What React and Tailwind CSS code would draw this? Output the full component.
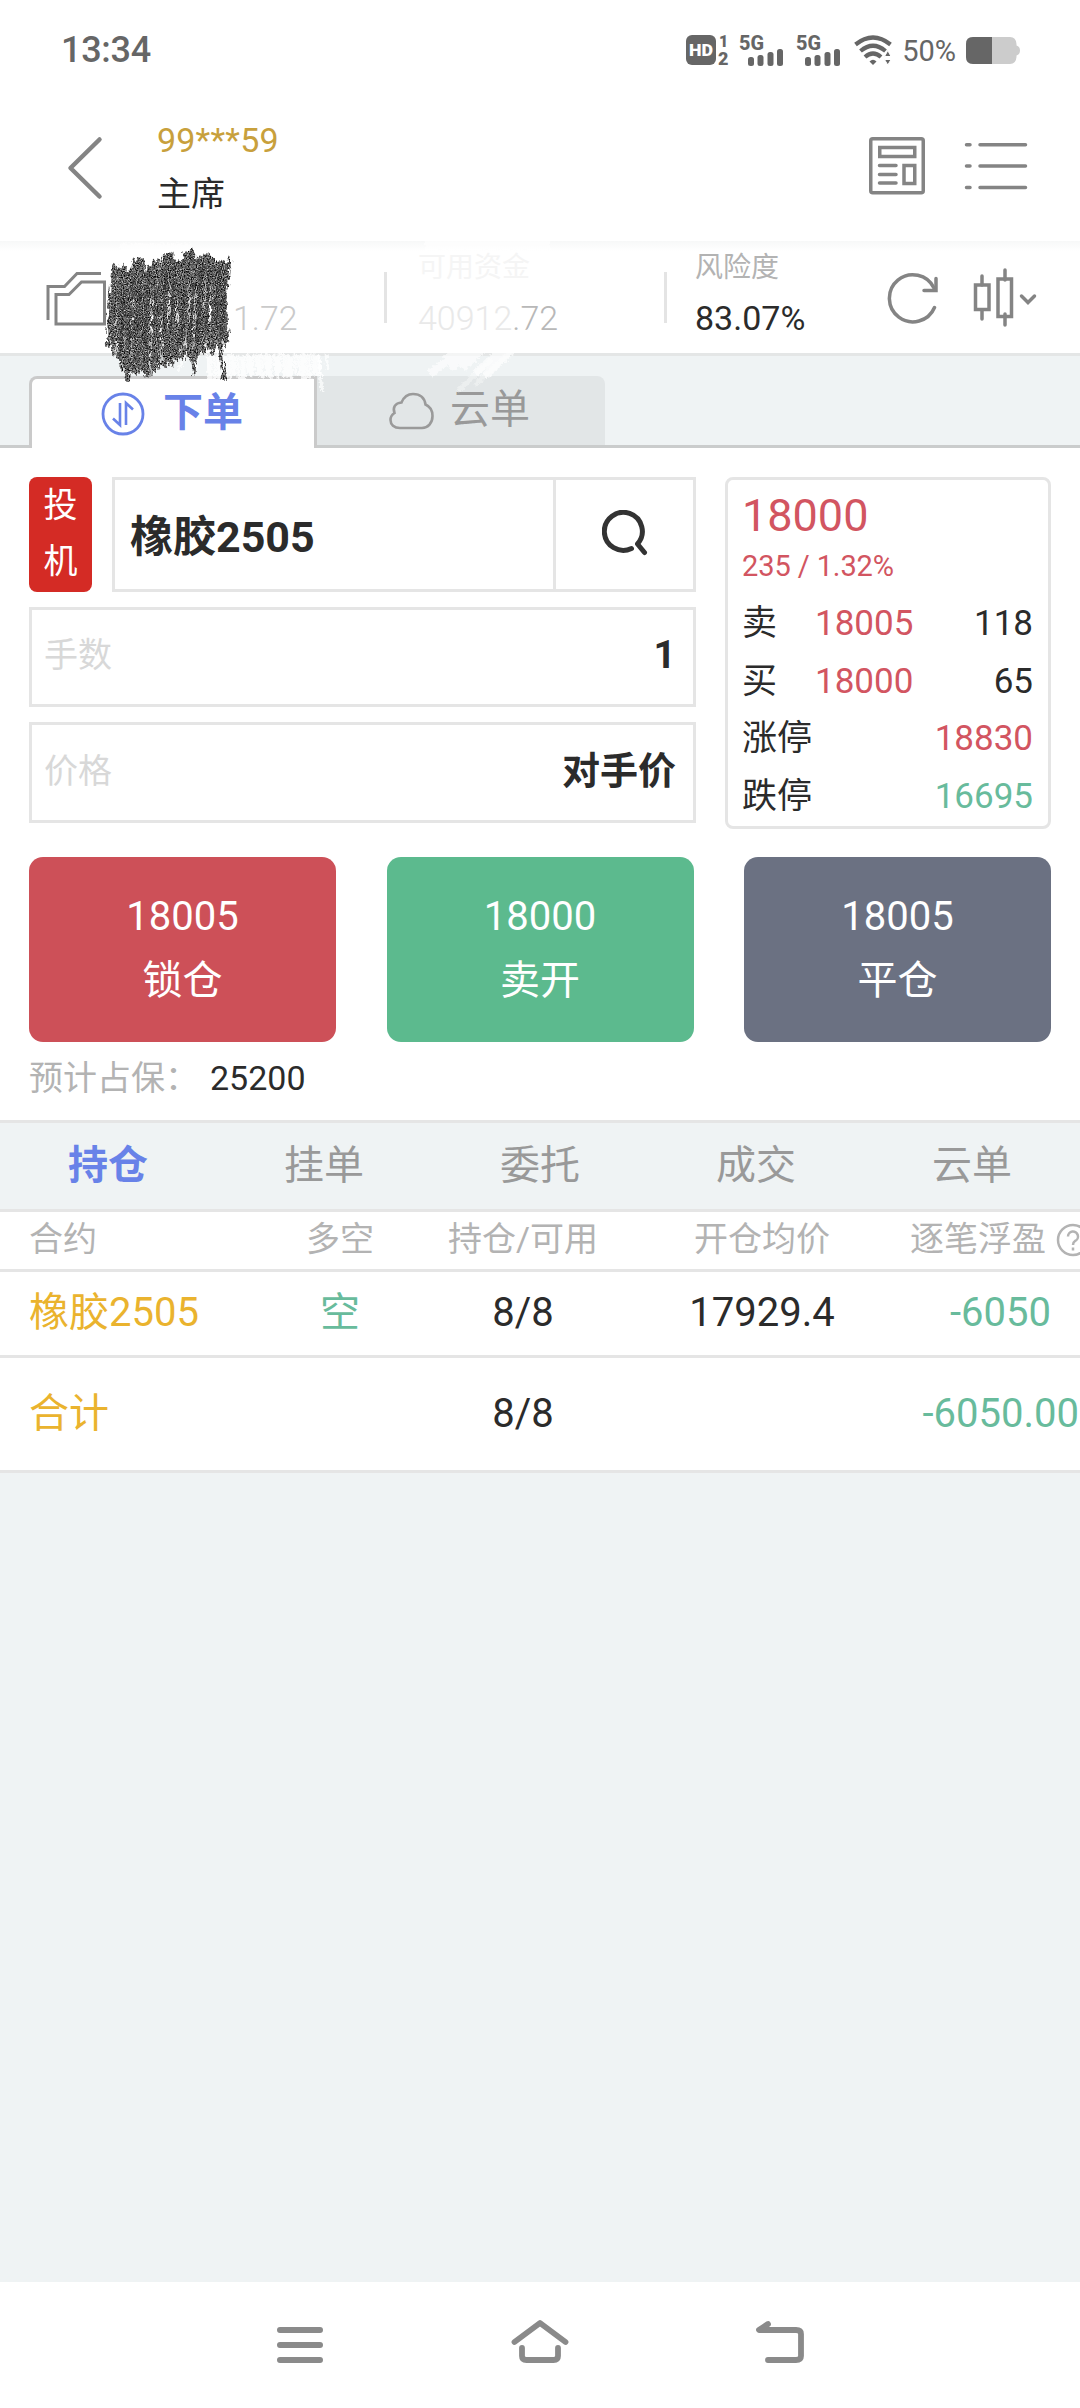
import { useState } from "react";

const orderTabs = ["持仓", "挂单", "委托", "成交", "云单"];

const actions = [
  { price: "18005", label: "锁仓", color: "bg-[#cd5058]" },
  { price: "18000", label: "卖开", color: "bg-[#5cba8e]" },
  { price: "18005", label: "平仓", color: "bg-[#6b7182]" },
];

const quotes = [
  { label: "卖", price: "18005", volume: "118" },
  { label: "买", price: "18000", volume: "65" },
];

// Small seeded generator so the pencil strokes stay the same on every render
const seeded = (seed) => () => {
  seed = (seed * 16807) % 2147483647;
  return seed / 2147483647;
};

const topEdge = [[8, 274], [12, 268], [20, 265], [26, 273], [37, 257], [45, 266], [57, 261], [67, 254], [78, 260], [90, 250], [98, 259], [106, 252], [113, 262], [122, 261], [127, 262]];
const bottomEdge = [[8, 354], [15, 363], [25, 380], [35, 375], [45, 379], [55, 374], [65, 367], [74, 367], [82, 360], [92, 368], [100, 356], [110, 356], [122, 350], [130, 341]];

const edgeAt = (edge, x) => {
  const i = edge.findIndex(([px]) => px >= x);
  if (i <= 0) return edge[i === 0 ? 0 : edge.length - 1][1];
  const [x0, y0] = edge[i - 1];
  const [x1, y1] = edge[i];
  return y0 + ((x - x0) / (x1 - x0)) * (y1 - y0);
};

const rand = seeded(417);
const strokes = Array.from({ length: 47 }, (_, i) => {
  const x = 9 + i * 2.5;
  const top = edgeAt(topEdge, x + 3) + rand() * 7 - 247;
  const bottom = edgeAt(bottomEdge, x) - rand() * 9 - 240;
  return `M${x + 4 + rand() * 2} ${top + 3}L${x + rand() * 3} ${(top + bottom) / 2}L${x - 1 + rand() * 3} ${bottom - 2}`;
});

// Every few lines is pressed harder
const darkStrokes = Array.from({ length: 13 }, (_, i) => {
  const x = 18 + i * 8.6 + rand() * 4;
  return `M${x + 4} ${22 + rand() * 30}L${x} ${85 + rand() * 32}`;
});

const eraser = Array.from({ length: 38 }, (_, i) => `M${108 + i * 3} ${112 + rand() * 3}l${rand() * 2} ${19 + rand() * 8}`);

function StatusBar() {
  return (
    <div className="h-[100px] flex items-center justify-between pl-[61px] pr-[60px] text-[#666]">
      <span className="text-[36px] font-medium leading-[36px] tracking-[-0.3px]">13:34</span>
      <div className="flex items-center">
        <svg width="44" height="32" viewBox="0 0 44 32" className="mr-[10px] overflow-visible" fill="#666">
          <rect x="0" y="1" width="30" height="30" rx="6" />
          <text x="3" y="22" fontSize="17" fontWeight="900" fill="#fff" textLength="24" lengthAdjust="spacingAndGlyphs">HD</text>
          <text x="33" y="12.500" fontSize="16" fontWeight="900">1</text>
          <text x="32" y="31" fontSize="18" fontWeight="900">2</text>
        </svg>
        <Signal />
        <Signal />
        <svg width="38" height="32" viewBox="0 0 38 32" fill="none" stroke="#666" strokeWidth="4.200">
          <path d="M1.500 10.500Q19 -3.500 36.500 10.500" />
          <path d="M6.500 17Q19 6.500 31.500 17" />
          <path d="M11 23Q19 16 27 23" />
          <path d="M15.500 27.500Q19 24 22.500 27.500L19 31Z" fill="#666" stroke="none" />
          <path d="M30.500 22.500L33.800 16.500L37 22.500ZM30.500 25.500L33.800 31L37 25.500Z" fill="#666" stroke="#fff" strokeWidth="1" />
        </svg>
        <span className="text-[29px] leading-[30px] ml-[10px] mr-[10px] mt-[2px]">50%</span>
        <svg width="54" height="27" viewBox="0 0 54 27">
          <path d="M7 0H44Q50 0 50.500 7V8.500Q54 9.500 54 13.500T50.500 18.500V20Q50 27 44 27H7Q0 27 0 20V7Q0 0 7 0Z" fill="#ccc" />
          <path d="M7 0H26V27H7Q0 27 0 20V7Q0 0 7 0Z" fill="#666" />
        </svg>
      </div>
    </div>
  );
}

function Signal() {
  return (
    <svg width="45" height="32" viewBox="0 0 45 32" className="mr-[12px] overflow-visible" fill="#666">
      <text x="-1" y="15.500" fontSize="20" fontWeight="800" textLength="25" lengthAdjust="spacingAndGlyphs">5G</text>
      <rect x="8" y="23" width="6" height="9" rx="2.500" />
      <rect x="17.500" y="21" width="6" height="11" rx="2.500" />
      <rect x="27.500" y="18" width="6" height="14" rx="2.500" />
      <rect x="37" y="15" width="6" height="17" rx="2.500" />
    </svg>
  );
}

function Header() {
  return (
    <header className="h-[141px] flex items-start pl-[66px] pr-[52px]">
      <svg width="38" height="66" viewBox="0 0 38 66" className="mt-[35px]" fill="none" stroke="#848484" strokeWidth="4.500" strokeLinecap="round" strokeLinejoin="round">
        <path d="M33.500 4.500L4.500 33L33.500 61.500" />
      </svg>
      <div className="ml-[53px] mt-[13px] flex-1 text-[34px] leading-[54px]">
        <div className="text-[#c8a03c] tracking-[0.2px]">99***59</div>
        <div className="text-[#2b2b2b]">主席</div>
      </div>
      <svg width="56" height="58" viewBox="0 0 56 58" className="mt-[37px] mr-[39px]" fill="none" stroke="#848484" strokeWidth="3.500" strokeLinecap="round">
        <rect x="1.750" y="1.750" width="52.500" height="54" rx="2" />
        <rect x="10.750" y="10.500" width="35" height="9" />
        <path d="M10.500 28.500H27M10.500 37.500H27M10.500 46H27" />
        <rect x="35" y="28.500" width="10.750" height="18" />
      </svg>
      <svg width="64" height="50" viewBox="0 0 64 50" className="mt-[42px]" fill="none" stroke="#848484" strokeWidth="3.500" strokeLinecap="round">
        <path d="M2.500 2.700H6M16 2.700H61.500M2.500 24H6M16 24H61.500M2.500 45.500H6M16 45.500H61.500" />
      </svg>
    </header>
  );
}

function AccountBar() {
  return (
    <div className="relative h-[115px] flex border-b-[3px] border-[#e4e6e6] bg-[linear-gradient(#f7f8f8,#fff_10px)] pl-[46px]">
      <svg width="62" height="56" viewBox="0 0 62 56" className="mt-[29px]" fill="none" stroke="#848484" strokeWidth="3">
        <path d="M2 50V16.500H18.500L31 3.500H55" />
        <path d="M10 24.500H23L35.500 12H58.500V54H10Z" />
      </svg>
      <div className="w-[276px] pt-[52px] pl-[125px] text-[34px] leading-[50px] text-[#cacaca] font-light">1.72</div>
      <div className="mt-[31px] w-[3px] h-[51px] bg-[#e4e4e4]" />
      <div className="w-[277px] pt-[2px] pl-[31px] leading-[50px]">
        <div className="text-[28px] text-[#f5f5f5]">可用资金</div>
        <div className="text-[34px] font-light text-[#e9e9e9]">
          40912<span className="text-[#b8b8b8]">.72</span>
        </div>
      </div>
      <div className="mt-[31px] w-[3px] h-[51px] bg-[#e4e4e4]" />
      <div className="w-[217px] pt-[2px] pl-[28px] leading-[50px]">
        <div className="text-[28px] text-[#b3b3b3]">风险度</div>
        <div className="text-[34px] text-[#2b2b2b]">83.07%</div>
      </div>
      <svg width="54" height="52" viewBox="0 0 54 52" className="mt-[31px] ml-[2px]" fill="none" stroke="#848484" strokeWidth="3.500" strokeLinecap="round">
        <path d="M48.500 35.500A23.500 23.500 0 1 1 48 16" />
        <path d="M50 6.500V18.500H38" />
      </svg>
      <svg width="64" height="60" viewBox="0 0 64 60" className="mt-[26px] ml-[33px]" fill="none" stroke="#848484" strokeWidth="3.500" strokeLinecap="round">
        <path d="M9 9V18M9 44V52M32 3V13M32 47V58" />
        <rect x="2.500" y="18" width="13.500" height="24.500" />
        <rect x="25" y="12" width="13.500" height="37.500" />
        <path d="M48.500 29L55 35.500L61.500 29" />
      </svg>

      {/* Smudges and scribble hiding the balances */}
      <svg width="600" height="170" viewBox="0 0 600 170" className="absolute left-[100px] top-0 z-10 pointer-events-none overflow-visible">
        <defs>
          <filter id="pencil" x="-5%" y="-5%" width="110%" height="110%" colorInterpolationFilters="sRGB">
            <feTurbulence type="fractalNoise" baseFrequency="0.4 0.15" numOctaves="2" seed="8" result="rough" />
            <feDisplacementMap in="SourceGraphic" in2="rough" scale="8" xChannelSelector="R" yChannelSelector="G" result="edge" />
            <feTurbulence type="fractalNoise" baseFrequency="0.85" numOctaves="2" seed="3" />
            <feColorMatrix type="matrix" values="1.400 0 0 0 -0.340  1.400 0 0 0 -0.340  1.400 0 0 0 -0.340  0 0 0 0 1" result="grain" />
            <feComposite in="grain" in2="edge" operator="in" />
          </filter>
          <filter id="pressed" x="-5%" y="-5%" width="110%" height="110%" colorInterpolationFilters="sRGB">
            <feTurbulence type="fractalNoise" baseFrequency="0.5 0.3" numOctaves="2" seed="12" result="rough" />
            <feDisplacementMap in="SourceGraphic" in2="rough" scale="8" xChannelSelector="R" yChannelSelector="G" />
          </filter>
          <filter id="chalk" x="-5%" y="-5%" width="110%" height="110%" colorInterpolationFilters="sRGB">
            <feTurbulence type="fractalNoise" baseFrequency="0.4" numOctaves="2" seed="5" result="rough" />
            <feDisplacementMap in="SourceGraphic" in2="rough" scale="6" xChannelSelector="R" yChannelSelector="G" />
          </filter>
        </defs>
        <g fill="none" stroke="#fff" filter="url(#chalk)">
          <path d={eraser.join("")} strokeWidth="2.800" opacity="0.800" />
          <path d="M218 113L222 150M226 113L228 128M40 128L52 112M78 130L86 114M95 128L98 114" strokeWidth="3" opacity="0.700" />
          <path d="M350 127L385 100M362 127L400 92M375 132L420 95M385 135L432 90M330 133L372 100M345 118L380 108" strokeWidth="8" opacity="0.600" />
          <path d="M358 150L392 118M375 144L410 112" strokeWidth="5" opacity="0.350" />
          <path d="M325 4H450M20 8H90" strokeWidth="11" opacity="0.600" />
        </g>
        <g fill="none" stroke="#000" strokeLinejoin="round" strokeLinecap="round" filter="url(#pencil)">
          <path d={strokes.join("")} strokeWidth="3.300" />
          <path d="M118 90L123 130L125 138M24 110L28 140M91 110L94 132M122 26L127 98M36 20L34 110M22 34L28 80M44 32L48 110" strokeWidth="4" />
        </g>
        <path d={darkStrokes.join("")} fill="none" stroke="#222" strokeWidth="2" opacity="0.500" filter="url(#pressed)" />
      </svg>
    </div>
  );
}

function OrderTabs() {
  return (
    <div className="h-[92px] pt-[20px] flex bg-[#eff3f4]">
      <div className="w-[29px] border-b-[3px] border-[#cacccc]" />
      <div className="w-[288px] flex items-center pl-[69px] bg-white border-t-[3px] border-x-[3px] border-[#cacaca] rounded-tl-[8px]">
        <svg width="44" height="44" viewBox="0 0 44 44" fill="none" stroke="#6882e8" strokeWidth="2.800">
          <circle cx="22" cy="22" r="20" />
          <path d="M19 11V33L12 26.500M25 33V11L32 17.500" strokeWidth="2.600" />
        </svg>
        <span className="ml-[18px] mb-[2px] text-[40px] leading-[44px] font-bold text-[#6882e8]">下单</span>
      </div>
      <div className="w-[288px] flex items-center pl-[72px] bg-[#e2e6e7] border-b-[3px] border-[#cacccc] rounded-tr-[8px]">
        <svg width="45" height="38" viewBox="0 0 45 38" fill="none" stroke="#9a9a9a" strokeWidth="2.600">
          <path d="M11 36C5 36 1.500 32.500 1.500 28C1.500 25 3 22.500 5.500 21C3.500 15.500 6 11 12.500 10.500C15 4.500 19 2 24 2C31 2 35.500 6 36.500 12.500C41 14.500 43.500 18.500 43.500 24C43.500 31 39 36 33 36Z" />
        </svg>
        <span className="ml-[16px] mb-[2px] text-[40px] leading-[44px] text-[#999]">云单</span>
      </div>
      <div className="flex-1 border-b-[3px] border-[#cacccc]" />
    </div>
  );
}

function OrderForm() {
  return (
    <div className="w-[667px] flex flex-col">
      <div className="flex h-[115px]">
        <div className="w-[63px] rounded-[8px] bg-[#d42b25] text-white text-[34px] leading-[56px] text-center">
          <div>投</div>
          <div>机</div>
        </div>
        <div className="ml-[20px] flex-1 flex border-[3px] border-[#e5e5e5]">
          <div className="flex-1 pl-[15px] pt-[6px] flex items-center text-[43px] font-bold text-[#2b2b2b]">橡胶2505</div>
          <div className="w-[140px] border-l-[3px] border-[#e5e5e5] flex items-center justify-center">
            <svg width="46" height="46" viewBox="0 0 46 46" className="mt-[-3px]" fill="none" stroke="#333" strokeWidth="5" strokeLinecap="round">
              <path d="M29.500 38.500A19 19 0 1 1 35.500 34L42.500 42.500" strokeLinejoin="round" />
            </svg>
          </div>
        </div>
      </div>
      <div className="mt-[15px] h-[100px] pl-[12px] pr-[17px] pb-[3px] flex items-center justify-between border-[3px] border-[#e5e5e5]">
        <span className="text-[34px] text-[#d8d8d8]">手数</span>
        <span className="text-[39px] font-bold text-[#2b2b2b]">1</span>
      </div>
      <div className="mt-[15px] h-[101px] pl-[12px] pr-[17px] pb-[3px] flex items-center justify-between border-[3px] border-[#e5e5e5]">
        <span className="text-[34px] text-[#d8d8d8]">价格</span>
        <span className="text-[38px] font-bold text-[#2b2b2b]">对手价</span>
      </div>
    </div>
  );
}

function QuoteCard() {
  return (
    <div className="w-[326px] h-[352px] border-[3px] border-[#e5e5e5] rounded-[8px] pl-[14px] pr-[15px] text-[35px] leading-[57.500px] text-[#2b2b2b]">
      <div className="mt-[8px] text-[45px] leading-[56px] text-[#d25561]">18000</div>
      <div className="mt-[2px] text-[29px] leading-[40px] mb-[9px] text-[#d25561] tracking-[-0.1px]">235 / 1.32%</div>
      {quotes.map((q) => (
        <div key={q.label} className="flex">
          <span className="w-[73px]">{q.label}</span>
          <span className="text-[#d25561]">{q.price}</span>
          <span className="flex-1 text-right">{q.volume}</span>
        </div>
      ))}
      <div className="flex justify-between">
        <span>涨停</span>
        <span className="text-[#d25561]">18830</span>
      </div>
      <div className="flex justify-between">
        <span>跌停</span>
        <span className="text-[#68bb9c]">16695</span>
      </div>
    </div>
  );
}

function Positions() {
  const [active, setActive] = useState("持仓");
  const row = "grid grid-cols-[221px_180px_186px_292px_172px] items-center pl-[29px] border-b-[3px] border-[#e5e5e5] bg-white whitespace-nowrap text-center";

  return (
    <section>
      <div className="h-[92px] flex border-y-[3px] border-[#e5e5e5] bg-[#eff3f4] text-[40px] leading-[84px] text-center">
        {orderTabs.map((tab) => (
          <button
            key={tab}
            onClick={() => setActive(tab)}
            className={`flex-1 ${active === tab ? "font-bold text-[#6882e8]" : "text-[#999]"}`}
          >
            {tab}
          </button>
        ))}
      </div>
      <div className={`${row} h-[60px] pb-[4px] text-[34px] leading-[52px] text-[#b3b3b3]`}>
        <span className="text-left">合约</span>
        <span>多空</span>
        <span>持仓/可用</span>
        <span>开仓均价</span>
        <span className="flex items-center pl-[2px] overflow-hidden">
          逐笔浮盈
          <svg width="34" height="34" viewBox="0 0 34 34" className="ml-[10px] mt-[3px] shrink-0" fill="none" stroke="#b3b3b3" strokeWidth="2.500">
            <circle cx="17" cy="17" r="15" />
            <path d="M12 13.500A5 5 0 1 1 19 18Q17 19.200 17 22M17 24.500V27.500" />
          </svg>
        </span>
      </div>
      <div className={`${row} h-[86px] pb-[2px] text-[40px] text-[#2b2b2b]`}>
        <span className="text-left text-[#eab32e]">橡胶2505</span>
        <span className="text-[#68bb9c]">空</span>
        <span>8/8</span>
        <span>17929.4</span>
        <span className="text-right pr-[29px] text-[#68bb9c]">-6050</span>
      </div>
      <div className={`${row} h-[115px] text-[40px] text-[#2b2b2b]`}>
        <span className="text-left text-[#eab32e]">合计</span>
        <span />
        <span>8/8</span>
        <span />
        <span className="text-right pr-px text-[#68bb9c]">-6050.00</span>
      </div>
    </section>
  );
}

function NavBar() {
  return (
    <nav className="h-[126px] bg-white flex justify-between items-start pt-[36px] px-[274px]">
      <svg width="52" height="48" viewBox="0 0 52 48" fill="none" stroke="#8a8a8a" strokeWidth="6" strokeLinecap="round">
        <path d="M6 12H46M6 27H46M6 42H46" />
      </svg>
      <svg width="60" height="48" viewBox="0 0 60 48" fill="none" stroke="#8a8a8a" strokeWidth="5.800" strokeLinecap="round" strokeLinejoin="round">
        <path d="M4.500 24L30 5L55.500 24" />
        <path d="M12 30V38Q12 42 16.500 42H43.500Q48 42 48 38V30" />
      </svg>
      <svg width="52" height="48" viewBox="0 0 52 48" fill="none" stroke="#8a8a8a" strokeWidth="5.800" strokeLinecap="round" strokeLinejoin="round">
        <path d="M14 6L5 12H42Q47 12 47 16V38Q47 42 42 42H14" />
      </svg>
    </nav>
  );
}

export default function App() {
  return (
    <div className="w-[1080px] h-[2408px] overflow-hidden flex flex-col bg-[#eff3f4] font-[Roboto,'Noto_Sans_CJK_SC',sans-serif]">
      <div className="bg-white">
        <StatusBar />
        <Header />
        <AccountBar />
        <OrderTabs />
        <div className="px-[29px] pt-[29px] h-[672px]">
          <div className="flex justify-between">
            <OrderForm />
            <QuoteCard />
          </div>
          <div className="mt-[28px] flex justify-between">
            {actions.map((a) => (
              <button key={a.label} className={`w-[307px] h-[185px] rounded-[14px] text-white text-[40px] leading-[64px] pb-[1px] ${a.color}`}>
                <div>{a.price}</div>
                <div>{a.label}</div>
              </button>
            ))}
          </div>
          <div className="mt-[10px] flex text-[34px] leading-[52px]">
            <span className="w-[181px] text-[#b3b3b3] whitespace-nowrap">预计占保：</span>
            <span className="text-[#2b2b2b]">25200</span>
          </div>
        </div>
      </div>
      <Positions />
      <div className="flex-1" />
      <NavBar />
    </div>
  );
}
